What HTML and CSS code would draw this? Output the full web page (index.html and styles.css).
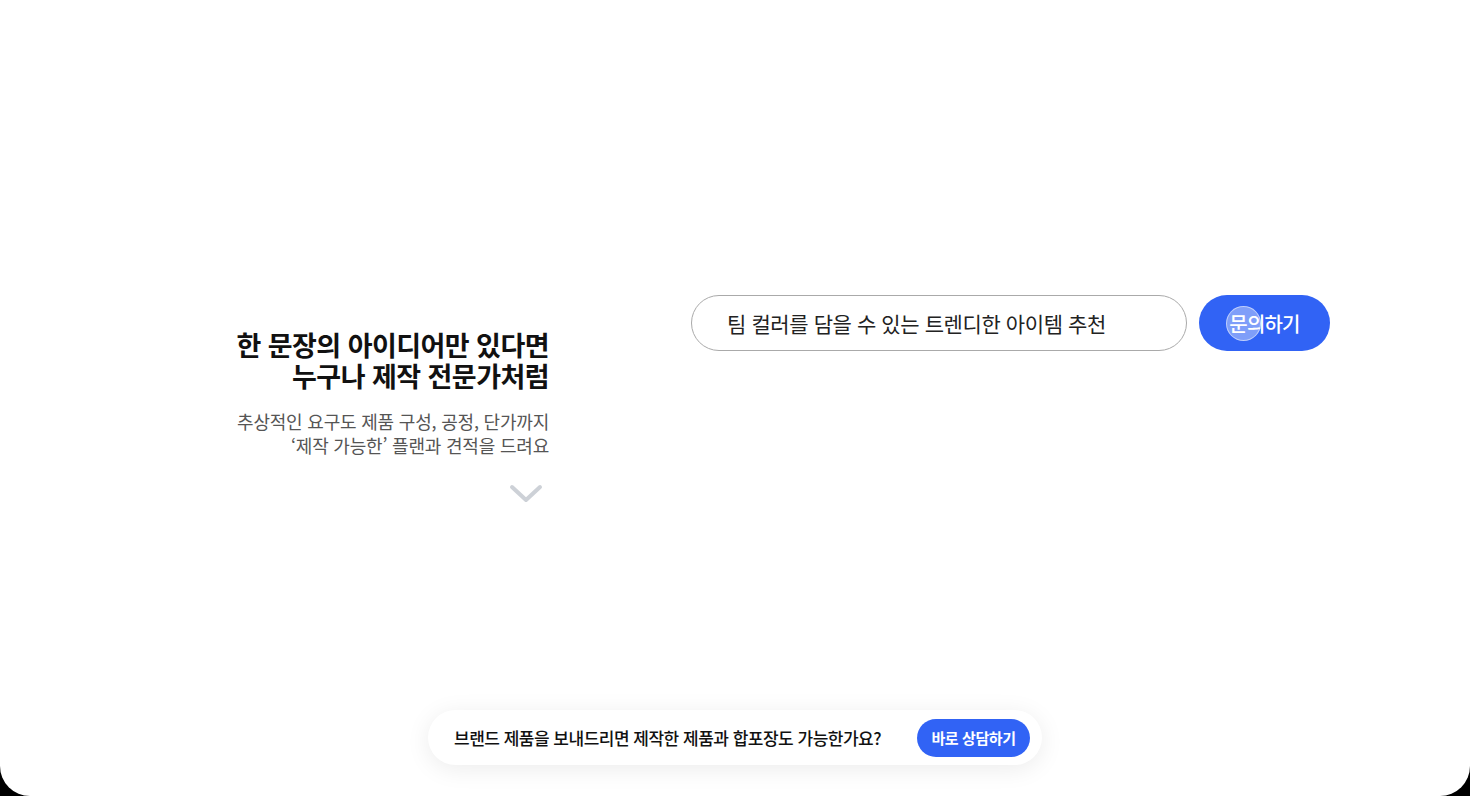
FILE: index.html
```html
<!DOCTYPE html>
<html lang="ko">
<head>
<meta charset="utf-8">
<title>제작 문의</title>
<link rel="stylesheet" href="styles.css">
</head>
<body>
<div class="page">
  <main class="hero">
    <section class="intro">
      <h1 class="intro-title">한 문장의 아이디어만 있다면<br>누구나 제작 전문가처럼</h1>
      <p class="intro-desc">추상적인 요구도 제품 구성, 공정, 단가까지<br>‘제작 가능한’ 플랜과 견적을 드려요</p>
      <div class="intro-more">
        <svg width="34" height="20" viewBox="0 0 34 20" fill="none"><path d="M3 3 L17 16 L31 3" stroke="#cdd1d7" stroke-width="4" stroke-linecap="round" stroke-linejoin="round"/></svg>
      </div>
    </section>
    <section class="search">
      <div class="search-input">팀 컬러를 담을 수 있는 트렌디한 아이템 추천</div>
      <button class="search-btn">문의하기<span class="cursor-dot"></span></button>
    </section>
  </main>
  <div class="cta-bar">
    <span class="cta-text">브랜드 제품을 보내드리면 제작한 제품과 합포장도 가능한가요?</span>
    <button class="cta-btn">바로 상담하기</button>
  </div>
</div>
</body>
</html>
```

FILE: styles.css
```css
* { box-sizing: border-box; }
html, body { margin: 0; padding: 0; }
body {
  background: #000;
  font-family: "Noto Sans CJK KR", "Noto Sans", sans-serif;
}
.page {
  width: 1470px;
  height: 796px;
  background: #fff;
  border-radius: 0 0 30px 30px;
  display: flex;
  flex-direction: column;
  overflow: hidden;
}
.hero {
  flex: 1;
  display: flex;
  align-items: flex-start;
  padding-top: 295px;
  padding-left: 189px;
  gap: 142px;
}
.intro {
  width: 360px;
  text-align: right;
  padding-top: 34px;
}
.intro-title {
  margin: 0;
  font-size: 27px;
  line-height: 31px;
  font-weight: 700;
  color: #111;
  letter-spacing: -0.55px;
}
.intro-desc {
  margin: 18px 0 0;
  font-size: 18px;
  line-height: 24px;
  color: #555;
  letter-spacing: -0.2px;
}
.intro-more {
  display: flex;
  justify-content: flex-end;
  padding-right: 6px;
  margin-top: 27px;
}
.search {
  display: flex;
  gap: 12px;
}
.search-input {
  width: 496px;
  height: 56px;
  border: 1px solid #aaa;
  border-radius: 28px;
  padding-left: 35px;
  display: flex;
  align-items: center;
  font-size: 21px;
  color: #222;
  letter-spacing: -0.4px;
}
.search-btn {
  position: relative;
  width: 131px;
  height: 56px;
  border: none;
  border-radius: 28px;
  background: #3163f5;
  color: #fff;
  font-family: inherit;
  font-size: 20px;
  font-weight: 500;
  letter-spacing: -0.8px;
  padding: 0;
}
.cursor-dot {
  position: absolute;
  left: 27px;
  top: 11px;
  width: 35px;
  height: 35px;
  border-radius: 50%;
  background: rgba(255, 255, 255, 0.38);
  border: 1px solid rgba(255, 255, 255, 0.5);
}
.cta-bar {
  width: 614px;
  height: 55px;
  margin: 0 auto 31px;
  background: #fff;
  border-radius: 28px;
  box-shadow: 0 4px 24px rgba(0, 0, 0, 0.08);
  display: flex;
  align-items: center;
  justify-content: space-between;
  padding: 0 12px 0 26px;
}
.cta-text {
  font-size: 17px;
  font-weight: 500;
  color: #111;
  letter-spacing: -0.5px;
}
.cta-btn {
  width: 113px;
  height: 38px;
  border: none;
  border-radius: 19px;
  background: #3163f5;
  color: #fff;
  font-family: inherit;
  font-size: 15px;
  font-weight: 700;
  letter-spacing: -0.4px;
  padding: 0;
}
```
